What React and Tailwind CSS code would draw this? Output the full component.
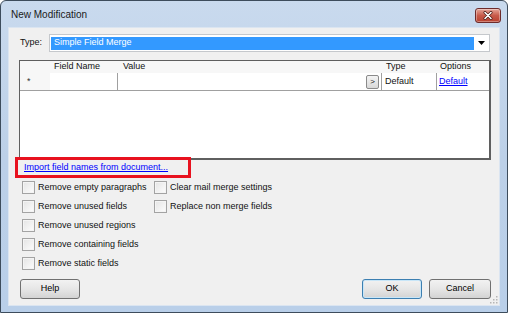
import React from 'react';

const Checkbox = ({ label }) => (
  <div className="flex items-center h-[19px]">
    <span className="w-[13px] h-[13px] border border-[#a3a3a3] bg-gradient-to-br from-[#e4e4e4] to-[#fdfdfd] shadow-[inset_0_0_0_1px_#f4f4f4] shrink-0" />
    <span className="ml-[3px] text-[#111]">{label}</span>
  </div>
);

const WinButton = ({ children, primary, width }) => (
  <button
    className={
      'h-[20px] rounded-[3px] border bg-gradient-to-b from-[#f2f2f2] via-[#e6e6e6] to-[#d3d3d3] text-[9px] text-black flex items-center justify-center ' +
      (primary ? 'border-[#3c7fb1] shadow-[inset_0_0_0_1px_#c8e6f8]' : 'border-[#707070]')
    }
    style={{ width }}
  >
    {children}
  </button>
);

export default function App() {
  return (
    <div className="w-[508px] h-[313px] bg-white font-['Liberation_Sans',Arial,sans-serif]">
      <div className="w-[508px] h-[313px] rounded-t-[6px] border border-[#3d4c5c] bg-gradient-to-b from-[#c9daee] via-[#bcd0e8] to-[#b9cfe9] flex flex-col">
        {/* title bar */}
        <div className="h-[26px] flex items-center justify-between pl-[10px] pr-[6px] shrink-0">
          <span className="text-[10px] text-[#1a1a1a] mt-[1px]">New Modification</span>
          <div className="w-[26px] h-[15px] mt-[2px] rounded-[3px] border border-[#6d2b2b] bg-gradient-to-b from-[#e5a69a] via-[#c75a4a] to-[#b8402f] flex items-center justify-center shadow-[inset_0_0_0_1px_rgba(255,255,255,0.35)]">
            <svg width="10" height="9" viewBox="0 0 10 9">
              <path d="M2 1.5 L8 7.5 M8 1.5 L2 7.5" stroke="#4a1a14" strokeWidth="3" strokeLinecap="round" />
              <path d="M2 1.5 L8 7.5 M8 1.5 L2 7.5" stroke="#ffffff" strokeWidth="1.6" strokeLinecap="round" />
            </svg>
          </div>
        </div>

        {/* client area */}
        <div className="mx-[7px] flex-1 mb-[6px] bg-[#f0f0f0] border border-[#dbe5f1] relative text-[9px] text-[#111]">
          {/* type row */}
          <div className="flex items-center mt-[6px] pl-[11px] pr-[9px] h-[18px]">
            <span className="w-[29px]">Type:</span>
            <div className="flex-1 h-[18px] bg-white border border-[#c5c8cc] flex items-center px-[1px]">
              <div className="flex-1 h-[13px] bg-[#3399ff] text-white flex items-center pl-[3px]">Simple Field Merge</div>
              <div className="w-[14px] flex items-center justify-center">
                <svg width="7" height="4" viewBox="0 0 7 4">
                  <path d="M0 0 L7 0 L3.5 4 Z" fill="#000" />
                </svg>
              </div>
            </div>
          </div>

          {/* grid */}
          <div className="mt-[8px] ml-[10px] mr-[8px] h-[100px] bg-white border border-[#5f5f5f] border-r-2 border-b-2 flex flex-col">
            <div className="flex h-[12px] bg-[#f7f7f7] items-center">
              <div className="w-[30px]" />
              <div className="w-[68px] pl-[4px]">Field Name</div>
              <div className="w-[264px] pl-[5px]">Value</div>
              <div className="w-[55px] pl-[4px]">Type</div>
              <div className="flex-1 pl-[3px]">Options</div>
            </div>
            <div className="flex h-[18px] border-b border-[#a0a0a0]">
              <div className="w-[30px] bg-[#f7f7f7] flex items-center pl-[7px] text-[#333]">*</div>
              <div className="w-[68px] border-r border-[#a0a0a0]" />
              <div className="w-[264px] border-r border-[#a0a0a0] flex items-center justify-end pr-[2px]">
                <div className="w-[13px] h-[14px] rounded-[2px] border border-[#8a8a8a] bg-gradient-to-b from-[#f4f4f4] to-[#d8d8d8] flex items-center justify-center text-[8px]">&gt;</div>
              </div>
              <div className="w-[55px] border-r border-[#a0a0a0] flex items-center pl-[3px]">Default</div>
              <div className="flex-1 flex items-center pl-[2px] text-[#0000ff] underline">Default</div>
            </div>
            <div className="flex-1" />
          </div>

          {/* import link, highlighted */}
          <div className="relative -mt-[3px] ml-[6px] w-[176px] h-[21px] border-[3px] border-[#e8121f] flex items-center pl-[6px]">
            <span className="text-[#0000ff] underline">Import field names from document...</span>
          </div>

          {/* options */}
          <div className="flex pl-[13px]">
            <div className="w-[132px] flex flex-col">
              <Checkbox label="Remove empty paragraphs" />
              <Checkbox label="Remove unused fields" />
              <Checkbox label="Remove unused regions" />
              <Checkbox label="Remove containing fields" />
              <Checkbox label="Remove static fields" />
            </div>
            <div className="flex flex-col">
              <Checkbox label="Clear mail merge settings" />
              <Checkbox label="Replace non merge fields" />
            </div>
          </div>

          {/* buttons */}
          <div className="flex items-center mt-[6px] pl-[11px] pr-[8px]">
            <WinButton width={60}>Help</WinButton>
            <div className="flex-1" />
            <WinButton primary width={60}>OK</WinButton>
            <div className="w-[7px]" />
            <WinButton width={62}>Cancel</WinButton>
          </div>

          {/* size grip */}
          <svg className="absolute right-[1px] bottom-[1px]" width="10" height="10" viewBox="0 0 10 10">
            {[[8, 2], [8, 5], [5, 5], [8, 8], [5, 8], [2, 8]].map(([x, y], i) => (
              <rect key={i} x={x} y={y} width="1.5" height="1.5" fill="#b5b5b5" />
            ))}
          </svg>
        </div>
      </div>
    </div>
  );
}
